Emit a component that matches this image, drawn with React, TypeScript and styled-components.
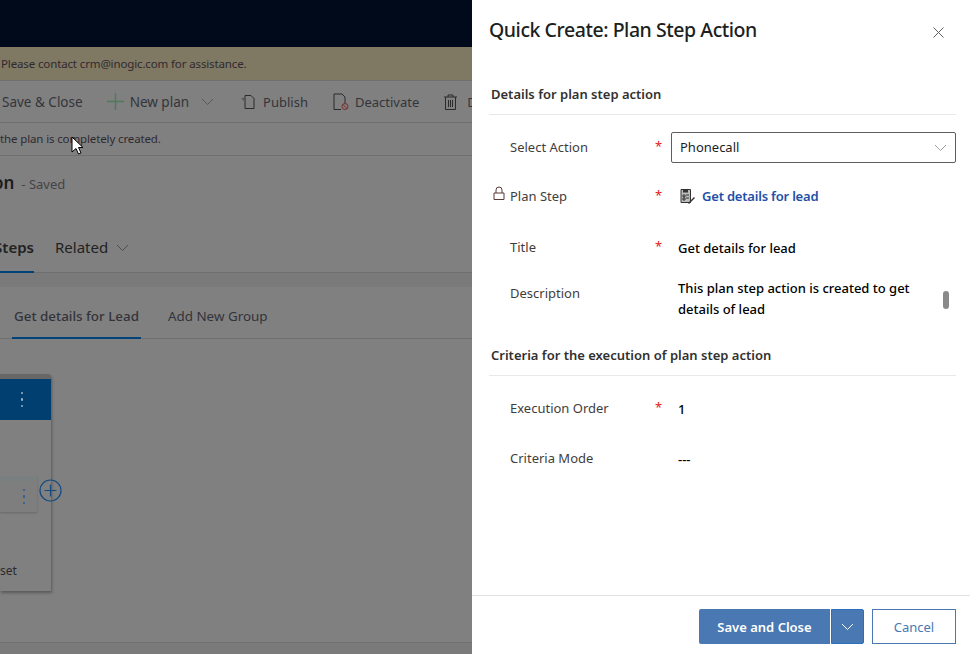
import { FC } from 'react';
import styled, { createGlobalStyle } from 'styled-components';

const GlobalStyle = createGlobalStyle`
    html, body {
        margin: 0;
        height: 100%;
        overflow: hidden;
        background: #fff;
        font-family: "Noto Sans", "Open Sans", sans-serif;
    }
    * {
        box-sizing: border-box;
    }
`

const Screen = styled.div`
    display: flex;
    width: 970px;
    height: 654px;
    overflow: hidden;
`

// dimmed page behind the panel

const Page = styled.div`
    position: relative;
    display: flex;
    flex-direction: column;
    width: 472px;
    height: 654px;
    overflow: hidden;
    background: #808080;
    color: #2b2b2b;
    font-size: 13px;
`

const TopBar = styled.div`
    height: 47px;
    background: #000a1a;
`

const Notice = styled.div`
    display: flex;
    align-items: center;
    height: 34px;
    padding-left: 1px;
    background: #7f7862;
    border-bottom: 1px solid #6f6f6f;
    color: #2f2a30;
    font-size: 11.5px;
    letter-spacing: -0.13px;
`

const CommandBar = styled.div`
    display: flex;
    align-items: center;
    height: 42px;
    padding-left: 2px;
    border-bottom: 1px solid #6f6f6f;
    white-space: nowrap;
`

const Command = styled.div<{ $gap?: number; $left?: number; $size?: number }>`
    display: flex;
    align-items: center;
    gap: ${p => p.$gap ?? 6}px;
    margin-left: ${p => p.$left ?? 0}px;
    color: #33353a;
    font-size: ${p => p.$size ?? 13.5}px;
`

const InfoStrip = styled.div`
    display: flex;
    align-items: center;
    height: 33px;
    padding-bottom: 2px;
    border-bottom: 1px solid #6f6f6f;
    color: #2f2a30;
    font-size: 11.5px;
    letter-spacing: -0.13px;
`

const RecordHeader = styled.div`
    display: flex;
    align-items: baseline;
    gap: 7px;
    height: 50px;
    padding-top: 15px;
`

const RecordName = styled.span`
    margin-left: -7px;
    font-size: 17px;
    font-weight: 600;
    color: #1c1c1c;
`

const RecordState = styled.span`
    font-size: 13px;
    color: #444;
`

const Tabs = styled.div`
    display: flex;
    align-items: center;
    height: 44px;
    margin-top: 23px;
    border-bottom: 1px solid #6f6f6f;
    font-size: 15px;
`

const TabItem = styled.div<{ $active?: boolean; $width?: number; $left?: number }>`
    display: flex;
    align-items: center;
    justify-content: flex-end;
    gap: 8px;
    height: 44px;
    padding-bottom: 5px;
    width: ${p => (p.$width ? `${p.$width}px` : 'auto')};
    margin-left: ${p => p.$left ?? 0}px;
    font-weight: ${p => (p.$active ? 600 : 400)};
    color: #222;
    overflow: hidden;
    border-bottom: 2px solid ${p => (p.$active ? '#00437a' : 'transparent')};
`

const Band = styled.div`
    height: 14px;
    background: #7a7a7a;
`

const SubTabs = styled.div`
    display: flex;
    height: 52px;
    padding-left: 12px;
    border-bottom: 1px solid #6f6f6f;
    font-size: 13.4px;
`

const SubTab = styled.div<{ $active?: boolean; $left?: number }>`
    display: flex;
    align-items: center;
    height: 52px;
    padding: 8px 2px 0;
    margin-left: ${p => p.$left ?? 0}px;
    font-weight: ${p => (p.$active ? 500 : 400)};
    color: #33333a;
    border-bottom: 2px solid ${p => (p.$active ? '#00437a' : 'transparent')};
`

const Board = styled.div`
    flex: 1;
    padding-top: 35px;
`

const GroupCard = styled.div`
    position: relative;
    display: flex;
    flex-direction: column;
    width: 51px;
    height: 217px;
    border-top: 5px solid #676767;
    border-top-right-radius: 3px;
    box-shadow: 1px 2px 3px rgba(0, 0, 0, 0.3);
`

const GroupHead = styled.div`
    display: flex;
    align-items: center;
    justify-content: flex-end;
    height: 41px;
    padding-right: 28px;
    background: #003f70;
`

const Dots = styled.span<{ $color: string }>`
    display: flex;
    flex-direction: column;
    gap: 4px;
    span {
        width: 2.5px;
        height: 2.5px;
        border-radius: 50%;
        background: ${p => p.$color};
    }
`

const StepCard = styled.div`
    display: flex;
    align-items: center;
    justify-content: flex-end;
    width: 37px;
    height: 35px;
    margin-top: 57px;
    padding-right: 12px;
    background: #7e7e7e;
    border-top: 4px solid #7a8080;
    box-shadow: 0 1px 2px rgba(0, 0, 0, 0.2);
`

const CardFoot = styled.div`
    margin-top: 50px;
    color: #2b2b2b;
    font-size: 12px;
`

const AddButton = styled.svg`
    position: absolute;
    top: 100px;
    left: 39px;
`

const PageFooter = styled.div`
    height: 12px;
    background: #7a7a7a;
    border-top: 1px solid #6f6f6f;
`

const Cursor = styled.svg`
    position: absolute;
    top: 136px;
    left: 71px;
`

// quick create panel

const Panel = styled.div`
    position: relative;
    display: flex;
    flex-direction: column;
    width: 498px;
    height: 654px;
    background: #fff;
    color: #323130;
`

const PanelHead = styled.div`
    display: flex;
    justify-content: space-between;
    height: 84px;
    padding: 16px 26px 0 17px;
`

const PanelTitle = styled.h1`
    margin: 0;
    font-size: 19.5px;
    line-height: 28px;
    font-weight: 500;
    letter-spacing: -0.45px;
    color: #201f1e;
`

const CloseIcon = styled.svg`
    margin-top: 11px;
`

const Form = styled.div`
    flex: 1;
    padding: 0 14px 0 17px;
`

const SectionTitle = styled.div`
    height: 31px;
    padding-left: 2px;
    line-height: 20px;
    font-size: 13px;
    font-weight: 600;
    color: #323130;
    border-bottom: 1px solid #e8e8e8;
`

const Row = styled.div<{ $height: number; $top?: number; $start?: boolean }>`
    display: grid;
    grid-template-columns: 145px 16px 1fr;
    align-items: ${p => (p.$start ? 'start' : 'center')};
    height: ${p => p.$height}px;
    padding-top: ${p => p.$top ?? 0}px;
    padding-left: 21px;
`

const Label = styled.div<{ $offset?: number }>`
    position: relative;
    margin-top: ${p => p.$offset ?? 0}px;
    font-size: 13px;
    color: #3f3e3d;
`

const LockIcon = styled.svg`
    position: absolute;
    left: -17px;
    top: -1px;
`

const Star = styled.div`
    font-size: 13px;
    margin-top: -2px;
    color: #e0201c;
`

const SelectBox = styled.div`
    display: flex;
    align-items: center;
    justify-content: space-between;
    height: 31px;
    padding: 0 8px 0 8px;
    border: 1px solid #605e5c;
    border-radius: 2px;
    font-size: 13px;
    color: #201f1e;
`

const Value = styled.div`
    padding-left: 7px;
    padding-top: 3px;
    font-size: 13px;
    line-height: 21px;
    font-weight: 500;
    color: #000;
`

const LinkValue = styled.div`
    display: flex;
    align-items: center;
    gap: 6px;
    padding-left: 8px;
    font-size: 13px;
    font-weight: 600;
    letter-spacing: -0.2px;
    color: #1e4fa8;
`

const ScrollThumb = styled.div`
    position: absolute;
    top: 291px;
    left: 471px;
    width: 6px;
    height: 18px;
    border-radius: 3px;
    background: #8a8a8a;
`

const PanelFoot = styled.div`
    display: flex;
    justify-content: flex-end;
    gap: 8px;
    height: 59px;
    padding: 13px 14px 0 0;
    border-top: 1px solid #e1e1e1;
`

const SplitButton = styled.div`
    display: flex;
    height: 35px;
`

const SaveButton = styled.div`
    display: flex;
    align-items: center;
    justify-content: center;
    width: 131px;
    background: #4a78b2;
    border-radius: 2px 0 0 2px;
    color: #fff;
    font-size: 13px;
    font-weight: 600;
`

const MoreButton = styled.div`
    display: flex;
    align-items: center;
    justify-content: center;
    width: 33px;
    margin-left: 1px;
    background: #4a78b2;
    border: 1px solid #2b6fc0;
    border-radius: 0 2px 2px 0;
`

const CancelButton = styled.div`
    display: flex;
    align-items: center;
    justify-content: center;
    width: 84px;
    height: 35px;
    border: 1px solid #4a78b2;
    color: #4a78b2;
    font-size: 13px;
`

const Chevron: FC<{ color: string; size?: number }> = ({ color, size = 13 }) => (
    <svg width={size} height={size} viewBox="0 0 13 13" fill="none">
        <path d="M1 4l5.5 5.5L12 4" stroke={color} strokeWidth="1" />
    </svg>
);

const VerticalDots: FC<{ color: string }> = ({ color }) => (
    <Dots $color={color}>
        <span />
        <span />
        <span />
    </Dots>
);

const App: FC = () => {
    return (
        <Screen>
            <GlobalStyle />
            <Page>
                <TopBar />
                <Notice>Please contact crm@inogic.com for assistance.</Notice>
                <CommandBar>
                    <Command>Save &amp; Close</Command>
                    <Command $left={24}>
                        <svg width="17" height="17" viewBox="0 0 17 17">
                            <path d="M8.5 0v17M0 8.5h17" stroke="#4d7a5a" strokeWidth="1.4" />
                        </svg>
                        New plan
                    </Command>
                    <Command $left={12}>
                        <Chevron color="#55585c" />
                    </Command>
                    <Command $left={26} $gap={7} $size={13}>
                        <svg width="16" height="16" viewBox="0 0 16 16" fill="none">
                            <path d="M5 1.500h6l3 3v10H5z" stroke="#2b2b2b" />
                            <path d="M1 4h4v4z" fill="#555" />
                        </svg>
                        Publish
                    </Command>
                    <Command $left={25} $gap={6} $size={13}>
                        <svg width="16" height="18" viewBox="0 0 16 18" fill="none">
                            <path d="M1 1h8l3 3v6M8 16.500H1V1" stroke="#2b2b2b" />
                            <circle cx="12" cy="13.500" r="3" stroke="#7a2a2a" />
                            <path d="M10 11.500l4 4" stroke="#7a2a2a" />
                        </svg>
                        Deactivate
                    </Command>
                    <Command $left={25} $gap={10} $size={13}>
                        <svg width="13" height="16" viewBox="0 0 13 16" fill="none">
                            <path d="M0 3h13M4 3V1h5v2M1.500 3v12.500h10V3M4.500 6v7M6.500 6v7M8.500 6v7" stroke="#2b2b2b" />
                        </svg>
                        D
                    </Command>
                </CommandBar>
                <InfoStrip>the plan is completely created.</InfoStrip>
                <RecordHeader>
                    <RecordName>on</RecordName>
                    <RecordState>- Saved</RecordState>
                </RecordHeader>
                <Tabs>
                    <TabItem $active $width={34}>Steps</TabItem>
                    <TabItem $left={21}>
                        Related
                        <Chevron color="#4c4c4c" />
                    </TabItem>
                </Tabs>
                <Band />
                <SubTabs>
                    <SubTab $active>Get details for Lead</SubTab>
                    <SubTab $left={25}>Add New Group</SubTab>
                </SubTabs>
                <Board>
                    <GroupCard>
                        <GroupHead>
                            <VerticalDots color="#9fb2c4" />
                        </GroupHead>
                        <StepCard>
                            <VerticalDots color="#2a5f95" />
                        </StepCard>
                        <CardFoot>set</CardFoot>
                        <AddButton width="23" height="23" viewBox="0 0 23 23" fill="none">
                            <circle cx="11.500" cy="11.500" r="10.500" stroke="#144a80" strokeWidth="1.200" />
                            <path d="M11.500 5.500v12M5.500 11.500h12" stroke="#144a80" strokeWidth="1.200" />
                        </AddButton>
                    </GroupCard>
                </Board>
                <PageFooter />
                <Cursor width="13" height="20" viewBox="0 0 13 20">
                    <path d="M1 1v15l4-3.500L7.500 18l2.500-1-2.500-5.500H12z" fill="#fff" stroke="#000" />
                </Cursor>
            </Page>
            <Panel>
                <PanelHead>
                    <PanelTitle>Quick Create: Plan Step Action</PanelTitle>
                    <CloseIcon width="11" height="11" viewBox="0 0 11 11">
                        <path d="M0.500 0.500l10 10M10.500 0.500l-10 10" stroke="#605e5c" />
                    </CloseIcon>
                </PanelHead>
                <Form>
                    <SectionTitle>Details for plan step action</SectionTitle>
                    <Row $height={57} $top={7}>
                        <Label>Select Action</Label>
                        <Star>*</Star>
                        <SelectBox>
                            Phonecall
                            <Chevron color="#a19f9d" />
                        </SelectBox>
                    </Row>
                    <Row $height={48}>
                        <Label>
                            <LockIcon width="12" height="15" viewBox="0 0 12 15" fill="none">
                                <path d="M1 7h10v6.500H1zM3 7V4a3 3 0 016 0v3" stroke="#5a3a3a" />
                            </LockIcon>
                            Plan Step
                        </Label>
                        <Star>*</Star>
                        <LinkValue>
                            <svg width="17" height="17" viewBox="0 0 17 17" fill="none">
                                <path d="M2 1.500h9.500v13H2z" fill="#bbb" stroke="#333" />
                                <path d="M4 1.500h5v3H4z" fill="#333" />
                                <path d="M4 7h2v2H4zM7 7h3M4 10h2v2H4zM7 10h3" stroke="#333" />
                                <path d="M9 15l6-6 1 1-6 6z" fill="#333" />
                            </svg>
                            Get details for lead
                        </LinkValue>
                    </Row>
                    <Row $height={54}>
                        <Label>Title</Label>
                        <Star>*</Star>
                        <Value>Get details for lead</Value>
                    </Row>
                    <Row $height={71} $top={1} $start>
                        <Label $offset={9}>Description</Label>
                        <span />
                        <Value>This plan step action is created to get<br />details of lead</Value>
                    </Row>
                    <SectionTitle>Criteria for the execution of plan step action</SectionTitle>
                    <Row $height={57} $top={7}>
                        <Label>Execution Order</Label>
                        <Star>*</Star>
                        <Value>1</Value>
                    </Row>
                    <Row $height={50}>
                        <Label>Criteria Mode</Label>
                        <span />
                        <Value>---</Value>
                    </Row>
                </Form>
                <ScrollThumb />
                <PanelFoot>
                    <SplitButton>
                        <SaveButton>Save and Close</SaveButton>
                        <MoreButton>
                            <Chevron color="#fff" />
                        </MoreButton>
                    </SplitButton>
                    <CancelButton>Cancel</CancelButton>
                </PanelFoot>
            </Panel>
        </Screen>
    );
};

export default App;
